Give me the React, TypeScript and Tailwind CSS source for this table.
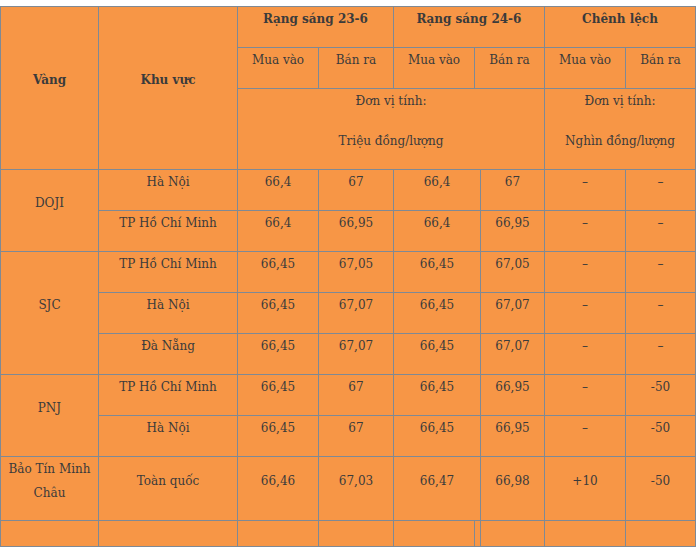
import { Fragment } from "react";
import type { ReactNode } from "react";

type CellProps = {
  children?: ReactNode;
  className?: string;
  bold?: boolean;
};

const Cell = ({ children, className = "", bold }: CellProps) => (
  <div
    className={`bg-[#f79646] flex flex-col items-center justify-center text-center ${
      bold ? "font-bold" : ""
    } ${className}`}
  >
    {children !== undefined && <p className="leading-6 pb-4">{children}</p>}
  </div>
);

type Row = {
  area: string;
  values: string[];
};

const groups: { name: string; rows: Row[] }[] = [
  {
    name: "DOJI",
    rows: [
      { area: "Hà Nội", values: ["66,4", "67", "66,4", "67", "–", "–"] },
      { area: "TP Hồ Chí Minh", values: ["66,4", "66,95", "66,4", "66,95", "–", "–"] },
    ],
  },
  {
    name: "SJC",
    rows: [
      { area: "TP Hồ Chí Minh", values: ["66,45", "67,05", "66,45", "67,05", "–", "–"] },
      { area: "Hà Nội", values: ["66,45", "67,07", "66,45", "67,07", "–", "–"] },
      { area: "Đà Nẵng", values: ["66,45", "67,07", "66,45", "67,07", "–", "–"] },
    ],
  },
  {
    name: "PNJ",
    rows: [
      { area: "TP Hồ Chí Minh", values: ["66,45", "67", "66,45", "66,95", "–", "-50"] },
      { area: "Hà Nội", values: ["66,45", "67", "66,45", "66,95", "–", "-50"] },
    ],
  },
];

const spanRows: Record<number, string> = {
  2: "row-span-2",
  3: "row-span-3",
};

export default function App() {
  return (
    <div className="bg-white w-[700px] h-[548px] overflow-hidden pt-[6px]">
      <div
        className="grid w-[696px] gap-px bg-[#7f8994] p-px text-[12px] text-[#3b3b3b]"
        style={{ fontFamily: '"DejaVu Serif", serif' }}
      >
        <div className="grid grid-cols-[97px_138px_80px_74px_80px_5px_63px_80px_69px] grid-rows-[40px_40px_80px_repeat(7,40px)_63px_25px] gap-px">
          {/* header */}
          <Cell bold className="row-span-3">Vàng</Cell>
          <Cell bold className="row-span-3">Khu vực</Cell>
          <Cell bold className="col-span-2">Rạng sáng 23-6</Cell>
          <Cell bold className="col-span-3">Rạng sáng 24-6</Cell>
          <Cell bold className="col-span-2">Chênh lệch</Cell>

          <Cell>Mua vào</Cell>
          <Cell>Bán ra</Cell>
          <Cell>Mua vào</Cell>
          <Cell className="col-span-2">Bán ra</Cell>
          <Cell>Mua vào</Cell>
          <Cell>Bán ra</Cell>

          <div className="col-span-5 bg-[#f79646] flex flex-col items-center justify-center text-center">
            <p className="leading-6 pb-4">Đơn vị tính:</p>
            <p className="leading-6 pb-4">Triệu đồng/lượng</p>
          </div>
          <div className="col-span-2 bg-[#f79646] flex flex-col items-center justify-center text-center">
            <p className="leading-6 pb-4">Đơn vị tính:</p>
            <p className="leading-6 pb-4">Nghìn đồng/lượng</p>
          </div>

          {/* data */}
          {groups.map((g) =>
            g.rows.map((r, i) => (
              <Fragment key={g.name + i}>
                {i === 0 && <Cell className={spanRows[g.rows.length]}>{g.name}</Cell>}
                <Cell>{r.area}</Cell>
                <Cell>{r.values[0]}</Cell>
                <Cell>{r.values[1]}</Cell>
                <Cell className="col-span-2">{r.values[2]}</Cell>
                <Cell>{r.values[3]}</Cell>
                <Cell>{r.values[4]}</Cell>
                <Cell>{r.values[5]}</Cell>
              </Fragment>
            ))
          )}

          <Cell>
            Bảo Tín Minh
            <br />
            Châu
          </Cell>
          <Cell>Toàn quốc</Cell>
          <Cell>66,46</Cell>
          <Cell>67,03</Cell>
          <Cell className="col-span-2">66,47</Cell>
          <Cell>66,98</Cell>
          <Cell>+10</Cell>
          <Cell>-50</Cell>

          {/* empty last row */}
          {Array.from({ length: 9 }).map((_, i) => (
            <div key={i} className="bg-[#f79646]" />
          ))}
        </div>
      </div>
    </div>
  );
}
